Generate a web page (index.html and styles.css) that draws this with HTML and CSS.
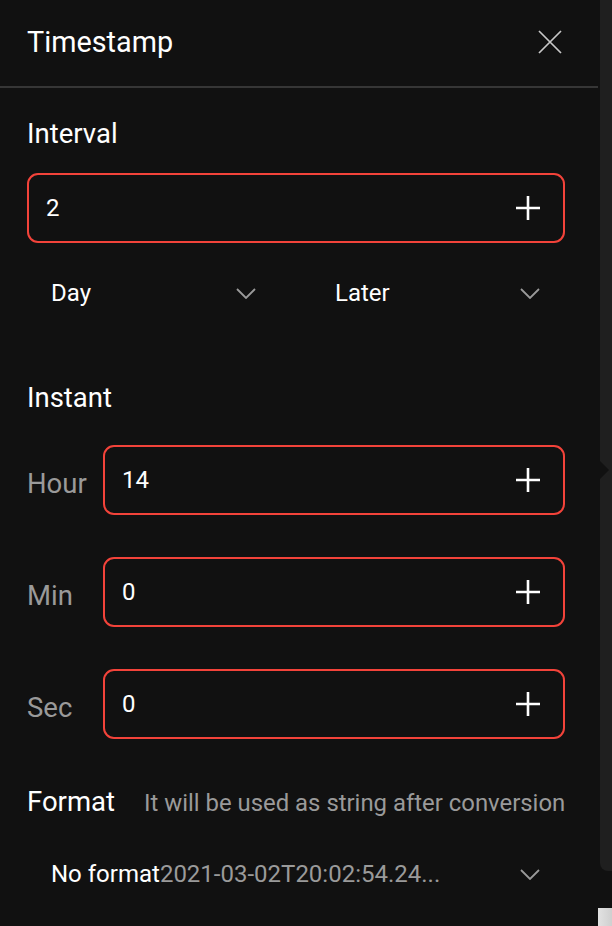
FILE: index.html
```html
<!DOCTYPE html>
<html lang="en">
<head>
<meta charset="utf-8">
<title>Timestamp</title>
<link rel="stylesheet" href="styles.css">
</head>
<body>
<div class="stage">
  <div class="panel">
    <header class="header">
      <h1 class="title">Timestamp</h1>
      <svg class="close" viewBox="0 0 24 24" width="24" height="24"><path d="M1 1L23 23M23 1L1 23" stroke="#c8c8c8" stroke-width="1.7" fill="none"/></svg>
    </header>
    <div class="body">
      <div class="label label-interval">Interval</div>
      <div class="box box-interval">
        <span class="value">2</span>
        <svg class="plus" viewBox="0 0 24 24" width="24" height="24"><path d="M12 0V24M0 12H24" stroke="#fff" stroke-width="2.6" fill="none"/></svg>
      </div>
      <div class="selects">
        <div class="select"><span class="sel-text">Day</span><svg class="chev" viewBox="0 0 20 11" width="20" height="11"><path d="M1 1L10 10L19 1" stroke="#9a9a9a" stroke-width="1.8" fill="none"/></svg></div>
        <div class="select"><span class="sel-text">Later</span><svg class="chev" viewBox="0 0 20 11" width="20" height="11"><path d="M1 1L10 10L19 1" stroke="#9a9a9a" stroke-width="1.8" fill="none"/></svg></div>
      </div>

      <div class="label label-instant">Instant</div>
      <div class="fields">
        <div class="field">
          <span class="field-label">Hour</span>
          <div class="box"><span class="value">14</span><svg class="plus" viewBox="0 0 24 24" width="24" height="24"><path d="M12 0V24M0 12H24" stroke="#fff" stroke-width="2.6" fill="none"/></svg></div>
        </div>
        <div class="field">
          <span class="field-label">Min</span>
          <div class="box"><span class="value">0</span><svg class="plus" viewBox="0 0 24 24" width="24" height="24"><path d="M12 0V24M0 12H24" stroke="#fff" stroke-width="2.6" fill="none"/></svg></div>
        </div>
        <div class="field">
          <span class="field-label">Sec</span>
          <div class="box"><span class="value">0</span><svg class="plus" viewBox="0 0 24 24" width="24" height="24"><path d="M12 0V24M0 12H24" stroke="#fff" stroke-width="2.6" fill="none"/></svg></div>
        </div>
      </div>

      <div class="format-head">
        <span class="label">Format</span>
        <span class="hint">It will be used as string after conversion</span>
      </div>
      <div class="select select-format">
        <span class="sel-text">No format<span class="sample">2021-03-02T20:02:54.24...</span></span>
        <svg class="chev" viewBox="0 0 20 11" width="20" height="11"><path d="M1 1L10 10L19 1" stroke="#9a9a9a" stroke-width="1.8" fill="none"/></svg>
      </div>
    </div>
  </div>
  <div class="side"></div>
  <div class="pointer"></div>
  <div class="corner-block"></div>
</div>
</body>
</html>
```
FILE: styles.css
```css
* { box-sizing: border-box; }
html, body { margin: 0; padding: 0; }
body {
  background: #111111;
  font-family: Roboto, "Liberation Sans", Arial, sans-serif;
  color: #ffffff;
  width: 612px;
  height: 926px;
  overflow: hidden;
}
.stage {
  position: relative;
  display: flex;
  width: 612px;
  height: 926px;
}
.panel {
  width: 598px;
  margin-right: 2px;
  flex: none;
}
.side {
  flex: 1;
  height: 871px;
  background: #1f1f1f;
  border-bottom-left-radius: 8px;
}
.pointer {
  position: absolute;
  left: 600px;
  top: 461px;
  width: 0;
  height: 0;
  border-top: 9px solid transparent;
  border-bottom: 9px solid transparent;
  border-left: 9px solid #111111;
}
.corner-block {
  position: absolute;
  left: 598px;
  top: 908px;
  width: 14px;
  height: 18px;
  background: linear-gradient(90deg, #e2e2e2, #cfcfcf);
}
.header {
  height: 88px;
  border-bottom: 2px solid #363636;
  display: flex;
  align-items: center;
  justify-content: space-between;
  padding: 0 36px 2px 27px;
}
.title {
  margin: 0;
  font-size: 28.8px;
  font-weight: 400;
  line-height: 32px;
}
.close { display: block; }
.body {
  padding: 0 33px 0 27px;
}
.label {
  font-size: 27.5px;
  line-height: 32px;
  color: #ffffff;
}
.label-interval { margin-top: 30px; }
.box {
  height: 70px;
  border: 2px solid #f3433a;
  border-radius: 11px;
  display: flex;
  align-items: center;
  justify-content: space-between;
  padding: 0 23px 0 17px;
  flex: 1;
}
.box-interval { margin-top: 23px; }
.value {
  font-size: 24px;
  line-height: 28px;
}
.plus { display: block; }
.selects {
  margin-top: 20px;
  display: grid;
  grid-template-columns: 1fr 1fr;
  column-gap: 30px;
}
.select {
  height: 60px;
  display: flex;
  align-items: center;
  justify-content: space-between;
  padding: 0 25px 0 24px;
}
.sel-text {
  font-size: 24px;
  line-height: 28px;
  white-space: nowrap;
}
.chev { display: block; }
.label-instant { margin-top: 59px; }
.fields {
  margin-top: 31px;
  display: flex;
  flex-direction: column;
  gap: 42px;
}
.field {
  display: flex;
  align-items: center;
}
.field-label {
  width: 76px;
  flex: none;
  font-size: 27.5px;
  line-height: 32px;
  padding-top: 7px;
  color: #9a9a9a;
}
.format-head {
  margin-top: 47px;
  display: flex;
  align-items: baseline;
  gap: 29px;
}
.hint {
  font-size: 23.9px;
  color: #9a9a9a;
  white-space: nowrap;
}
.select-format {
  margin-top: 26px;
}
.sample { color: #9a9a9a; }
```
